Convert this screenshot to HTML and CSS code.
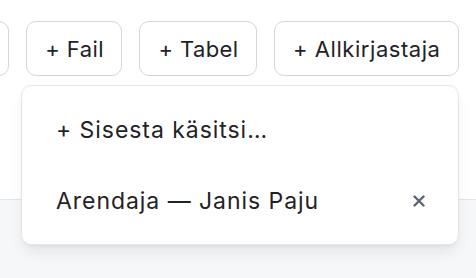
FILE: index.html
```html
<!DOCTYPE html>
<html lang="et">
<head>
<meta charset="utf-8">
<link rel="stylesheet" href="styles.css">
</head>
<body>
<div class="page">
  <header class="toolbar">
    <div class="actions">
      <button class="btn btn-cut" aria-label="Pilt"></button>
      <button class="btn">+ Fail</button>
      <button class="btn">+ Tabel</button>
      <div class="menu-wrap">
        <button class="btn btn-wide">+ Allkirjastaja</button>
        <div class="menu">
          <div class="menu-item">+ Sisesta käsitsi…</div>
          <div class="menu-item">
            <span>Arendaja — Janis Paju</span>
            <svg class="close" width="12" height="12" viewBox="0 0 12 12" aria-hidden="true">
              <path d="M1.5 1.5 L10.5 10.5 M10.5 1.5 L1.5 10.5" stroke="#5b6472" stroke-width="2.4" stroke-linecap="round" fill="none"/>
            </svg>
          </div>
        </div>
      </div>
    </div>
  </header>
  <main class="content"></main>
</div>
</body>
</html>
```

FILE: styles.css
```css
html, body {
  margin: 0;
  padding: 0;
  height: 100%;
}
body {
  font-family: Inter, "Noto Sans", sans-serif;
  color: #1f2328;
  background: #f6f7f9;
}
.page {
  display: flex;
  flex-direction: column;
  height: 100%;
  overflow: hidden;
}
.toolbar {
  background: #ffffff;
  height: 200px;
  box-sizing: border-box;
  border-bottom: 1px solid #e3e5e9;
  padding: 21px 17px 0 0;
}
.actions {
  display: flex;
  justify-content: flex-end;
  gap: 17px;
}
.btn {
  flex: none;
  font: inherit;
  font-size: 22px;
  line-height: 26px;
  letter-spacing: 0.4px;
  color: #1f2328;
  background: #ffffff;
  border: 1.5px solid #d3d6db;
  border-radius: 10px;
  height: 55px;
  padding: 0 17.5px 0 18px;
  box-sizing: border-box;
  cursor: pointer;
}
.btn-wide {
  letter-spacing: 0.55px;
}
.btn-cut {
  width: 120px;
}
.menu-wrap {
  position: relative;
  flex: none;
}
.menu {
  position: absolute;
  right: 0;
  top: 64px;
  width: 438px;
  box-sizing: border-box;
  background: #ffffff;
  border: 1px solid #e3e5e9;
  border-radius: 10px;
  padding: 8px;
  box-shadow: 0 10px 15px -3px rgba(17, 24, 39, 0.08), 0 4px 6px -4px rgba(17, 24, 39, 0.08);
  z-index: 10;
}
.menu-item {
  display: flex;
  align-items: center;
  justify-content: space-between;
  height: 71px;
  padding: 0 25px 0 26px;
  font-size: 23px;
  letter-spacing: 0.95px;
}
.close {
  display: block;
}
.content {
  flex: 1;
}
```
